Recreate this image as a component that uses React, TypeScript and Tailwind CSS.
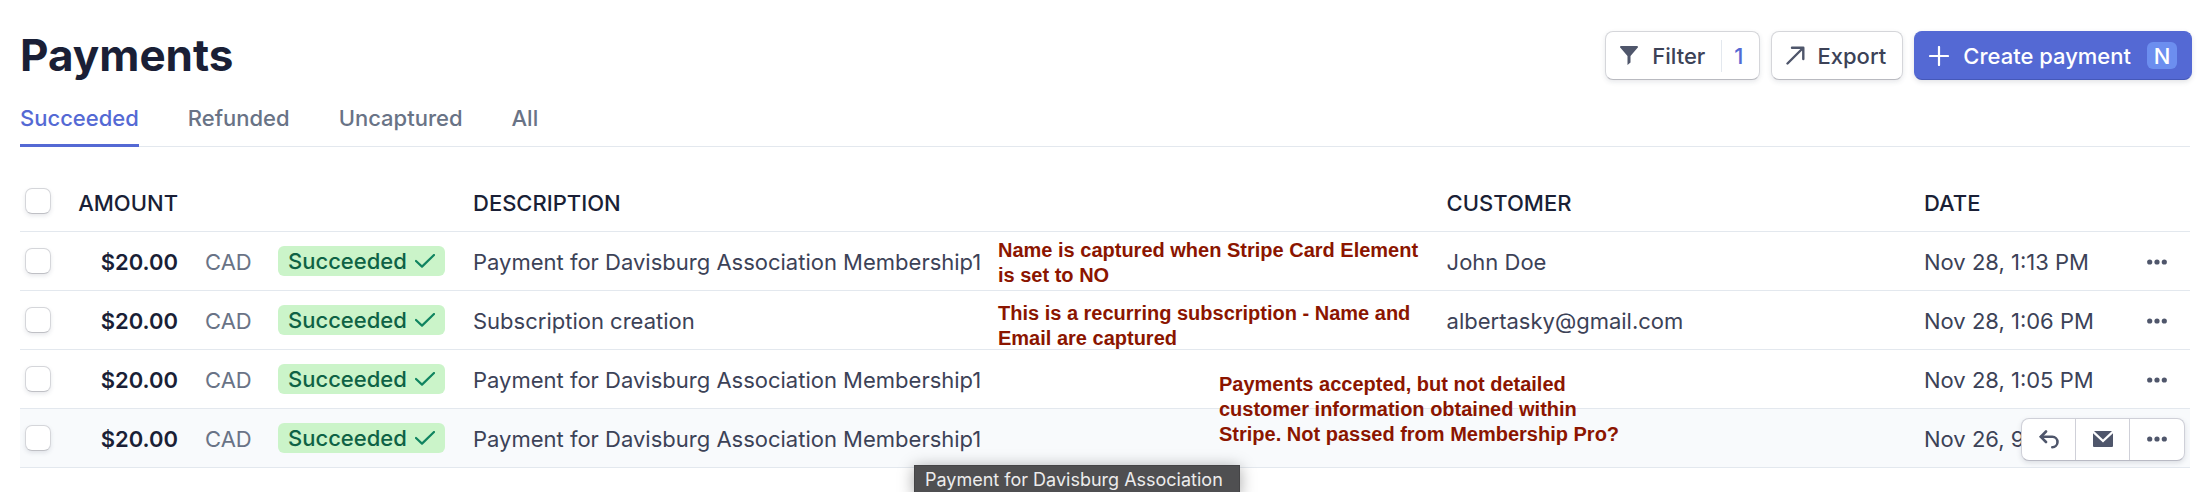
import type { ReactNode } from "react";

interface Payment {
  id: string;
  amount: string;
  currency: string;
  description: string;
  customer: string;
  date: string;
  hovered?: boolean;
  note?: ReactNode;
}

const tabs = ["Succeeded", "Refunded", "Uncaptured", "All"];

const payments: Payment[] = [
  {
    id: "p1",
    amount: "$20.00",
    currency: "CAD",
    description: "Payment for Davisburg Association Membership1",
    customer: "John Doe",
    date: "Nov 28, 1:13 PM",
    note: (
      <Note className="left-[525px] top-1.5">
        Name is captured when Stripe Card Element
        <br />
        is set to NO
      </Note>
    ),
  },
  {
    id: "p2",
    amount: "$20.00",
    currency: "CAD",
    description: "Subscription creation",
    customer: "albertasky@gmail.com",
    date: "Nov 28, 1:06 PM",
    note: (
      <Note className="left-[525px] top-2.5">
        This is a recurring subscription - Name and
        <br />
        Email are captured
      </Note>
    ),
  },
  {
    id: "p3",
    amount: "$20.00",
    currency: "CAD",
    description: "Payment for Davisburg Association Membership1",
    customer: "",
    date: "Nov 28, 1:05 PM",
    note: (
      <Note className="left-[746px] top-5.5">
        Payments accepted, but not detailed
        <br />
        customer information obtained within
        <br />
        Stripe. Not passed from Membership Pro?
      </Note>
    ),
  },
  {
    id: "p4",
    amount: "$20.00",
    currency: "CAD",
    description: "Payment for Davisburg Association Membership1",
    customer: "",
    date: "Nov 26, 9",
    hovered: true,
    note: (
      <div
        role="tooltip"
        className="absolute left-[441px] top-14 z-20 whitespace-nowrap border border-[#444446] bg-[#4f4f51] pl-2.5 pr-4 font-[Inter,sans-serif] text-[18px] leading-7 text-[#ececec] shadow-[0_2px_16px_rgba(0,0,0,0.35)]"
      >
        Payment for Davisburg Association
      </div>
    ),
  },
];

function Note({ className, children }: { className: string; children: ReactNode }) {
  return (
    <p
      className={`absolute z-10 whitespace-nowrap font-['Liberation_Sans',Arial,sans-serif] text-[20px] font-bold leading-[25px] text-[#8b1500] ${className}`}
    >
      {children}
    </p>
  );
}

function DotsIcon() {
  return (
    <svg width="20" height="6" viewBox="0 0 20 6" fill="currentColor" aria-hidden="true">
      <circle cx="2.7" cy="3" r="2.6" />
      <circle cx="10" cy="3" r="2.6" />
      <circle cx="17.3" cy="3" r="2.6" />
    </svg>
  );
}

function Checkbox({ label }: { label: string }) {
  return (
    <input
      type="checkbox"
      aria-label={label}
      className="ml-[5px] block size-[26px] appearance-none rounded-[7px] border border-[#d5d6da] border-b-[#bfc0c5] bg-white shadow-[0_2px_4px_rgba(60,66,87,0.12)]"
    />
  );
}

function StatusBadge() {
  return (
    <span className="inline-flex h-[30px] items-center gap-2 rounded-md bg-[#cbf4c9] px-2.5 align-middle font-medium text-[#0e6245]">
      Succeeded
      <svg width="20" height="14" viewBox="0 0 20 14" fill="none" stroke="#108460" strokeWidth="2.2" aria-hidden="true">
        <path d="M1 7l6 5.6L19 1" strokeLinecap="round" strokeLinejoin="round" />
      </svg>
    </span>
  );
}

function RowActions() {
  const button = "flex w-[54px] items-center justify-center";
  return (
    <div className="absolute right-[5px] top-[9px] flex h-[43px] divide-x divide-[#cfd0d8] overflow-hidden rounded-lg border border-[#cfd0d8] border-b-[#b9bac4] bg-white shadow-[0_2px_5px_rgba(60,66,87,0.15)]">
      <button type="button" aria-label="Refund" className={button}>
        <svg width="20" height="19" viewBox="0 0 20 19" fill="none" stroke="currentColor" strokeWidth="2.6" strokeLinecap="round" aria-hidden="true">
          <path d="M7 1.5L1.8 6.8L7 12" />
          <path d="M2 6.800h11.300a5.200 5.200 0 0 1 0 10.400" />
        </svg>
      </button>
      <button type="button" aria-label="Send receipt" className={button}>
        <svg width="20" height="16" viewBox="0 0 20 16" fill="currentColor" aria-hidden="true">
          <path d="M1 0h18L10 8.6z" />
          <path d="M0 2.2l10 9.2 10-9.2V15a1 1 0 0 1-1 1H1a1 1 0 0 1-1-1z" />
        </svg>
      </button>
      <button type="button" aria-label="More" className={button}>
        <DotsIcon />
      </button>
    </div>
  );
}

export default function App() {
  const toolbarButton =
    "flex h-[49px] items-center rounded-lg border border-[#d5d6da] border-b-[#b9bac0] bg-white text-[#3c4257] shadow-[0_2px_5px_rgba(60,66,87,0.12)]";

  return (
    <main className="min-h-screen overflow-hidden bg-white pl-5 pr-2.5 font-[Inter,sans-serif] text-[22px] leading-7 text-[#3c4257]">
      <header className="-mr-0.5 flex items-center justify-between pt-[31px]">
        <h1 className="text-[44px] font-bold leading-[49px] text-[#1a1f36]">Payments</h1>
        <div className="flex gap-[11px] font-medium">
          <button type="button" className={`${toolbarButton} pl-3.5 pr-4`}>
            <svg width="18" height="19" viewBox="0 0 18 19" fill="#4f566b" aria-hidden="true">
              <path d="M1 0h16a1 1 0 0 1 .8 1.600L10.500 10V16.500L7.500 19V10L.2 1.600A1 1 0 0 1 1 0z" />
            </svg>
            <span className="ml-3.5">Filter</span>
            <span className="ml-4 flex h-8 items-center border-l border-[#e3e8ee] pl-3 text-[#5469d4]">1</span>
          </button>
          <button type="button" className={`${toolbarButton} gap-3 pl-3.5 pr-4`}>
            <svg width="19" height="19" viewBox="0 0 19 19" fill="none" stroke="#4f566b" strokeWidth="2.4" strokeLinecap="round" strokeLinejoin="round" aria-hidden="true">
              <path d="M1.500 17.500L17 2M6 1.700H17.300V13" />
            </svg>
            Export
          </button>
          <button
            type="button"
            className="flex h-[49px] items-center rounded-lg border border-[#5469d4] border-b-[#4558b8] bg-[#5469d4] px-3.5 text-white shadow-[0_2px_5px_rgba(60,66,87,0.15)]"
          >
            <svg width="20" height="20" viewBox="0 0 20 20" stroke="currentColor" strokeWidth="2.200" strokeLinecap="round" aria-hidden="true">
              <path d="M10 1v18M1 10h18" />
            </svg>
            <span className="ml-3.5">Create payment</span>
            <kbd className="ml-4 flex h-[27px] w-[30px] items-center justify-center rounded-md bg-[#6c8eef] font-[Inter,sans-serif] text-[22px]">
              N
            </kbd>
          </button>
        </div>
      </header>

      <nav className="flex h-[67px] items-end gap-[49px] border-b border-[#e3e8ee] font-medium text-[#697386]">
        {tabs.map((tab, i) => (
          <a
            key={tab}
            href={`#${tab.toLowerCase()}`}
            className={
              i === 0
                ? "-mb-px border-b-[3px] border-[#5469d4] pb-3 text-[#5469d4]"
                : "border-b-2 border-transparent pb-3"
            }
          >
            {tab}
          </a>
        ))}
      </nav>

      <table className="mt-[25px] w-full table-fixed border-collapse">
        <thead className="text-left text-[#1a1f36]">
          <tr className="h-[59px] border-b border-[#e3e8ee]">
            <th className="w-[58px]">
              <Checkbox label="Select all payments" />
            </th>
            <th className="w-[100px] whitespace-nowrap pt-1 text-right font-medium">
              <span className="-ml-2">AMOUNT</span>
            </th>
            <th className="w-[100px]" aria-label="Currency" />
            <th className="w-[195px]" aria-label="Status" />
            <th className="pt-1 font-medium">DESCRIPTION</th>
            <th className="w-[22%] pt-1 font-medium">CUSTOMER</th>
            <th className="w-[202px] pt-1 font-medium">DATE</th>
            <th className="w-16" aria-label="Actions" />
          </tr>
        </thead>
        <tbody>
          {payments.map((p) => (
            <tr key={p.id} className={`h-[59px] border-b border-[#e3e8ee] ${p.hovered ? "bg-[#f8fafc]" : ""}`}>
              <td>
                <Checkbox label={`Select payment of ${p.date}`} />
              </td>
              <td className="pt-0.5 text-right font-semibold text-[#1a1f36]">{p.amount}</td>
              <td className="pl-[27px] pt-0.5 text-[#697386]">{p.currency}</td>
              <td>
                <StatusBadge />
              </td>
              <td className="relative whitespace-nowrap pt-0.5">
                {p.description}
                {p.note}
              </td>
              <td className="pt-0.5">{p.customer}</td>
              <td className="whitespace-nowrap pt-0.5">{p.date}</td>
              <td className="relative text-[#4f566b]">
                {p.hovered ? (
                  <RowActions />
                ) : (
                  <button type="button" aria-label="More" className="ml-[21px] flex h-7 items-center pt-0.5">
                    <DotsIcon />
                  </button>
                )}
              </td>
            </tr>
          ))}
        </tbody>
      </table>
    </main>
  );
}
